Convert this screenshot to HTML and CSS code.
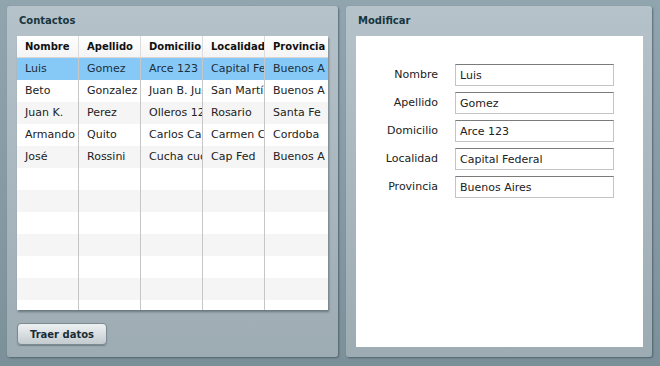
FILE: index.html
```html
<!DOCTYPE html>
<html>
<head>
<meta charset="utf-8">
<link rel="stylesheet" href="styles.css">
</head>
<body>
<div class="app">
  <section class="panel panel-left">
    <h2 class="panel-title">Contactos</h2>
    <div class="grid">
      <div class="row head">
        <div class="cell">Nombre</div>
        <div class="cell">Apellido</div>
        <div class="cell">Domicilio</div>
        <div class="cell">Localidad</div>
        <div class="cell">Provincia</div>
      </div>
      <div class="body">
        <div class="row sel"><div class="cell">Luis</div><div class="cell">Gomez</div><div class="cell">Arce 123</div><div class="cell">Capital Federal</div><div class="cell">Buenos Aires</div></div>
        <div class="row"><div class="cell">Beto</div><div class="cell">Gonzalez</div><div class="cell">Juan B. Justo</div><div class="cell">San Martín</div><div class="cell">Buenos Aires</div></div>
        <div class="row alt"><div class="cell">Juan K.</div><div class="cell">Perez</div><div class="cell">Olleros 1234</div><div class="cell">Rosario</div><div class="cell">Santa Fe</div></div>
        <div class="row"><div class="cell">Armando</div><div class="cell">Quito</div><div class="cell">Carlos Calvo</div><div class="cell">Carmen Carvajal</div><div class="cell">Cordoba</div></div>
        <div class="row alt"><div class="cell">José</div><div class="cell">Rossini</div><div class="cell">Cucha cucha</div><div class="cell">Cap Fed</div><div class="cell">Buenos Aires</div></div>
        <div class="row"><div class="cell"></div><div class="cell"></div><div class="cell"></div><div class="cell"></div><div class="cell"></div></div>
        <div class="row alt"><div class="cell"></div><div class="cell"></div><div class="cell"></div><div class="cell"></div><div class="cell"></div></div>
        <div class="row"><div class="cell"></div><div class="cell"></div><div class="cell"></div><div class="cell"></div><div class="cell"></div></div>
        <div class="row alt"><div class="cell"></div><div class="cell"></div><div class="cell"></div><div class="cell"></div><div class="cell"></div></div>
        <div class="row"><div class="cell"></div><div class="cell"></div><div class="cell"></div><div class="cell"></div><div class="cell"></div></div>
        <div class="row alt"><div class="cell"></div><div class="cell"></div><div class="cell"></div><div class="cell"></div><div class="cell"></div></div>
        <div class="row"><div class="cell"></div><div class="cell"></div><div class="cell"></div><div class="cell"></div><div class="cell"></div></div>
      </div>
    </div>
    <button class="btn">Traer datos</button>
  </section>
  <section class="panel panel-right">
    <h2 class="panel-title">Modificar</h2>
    <div class="content">
      <form class="form">
        <label class="lbl">Nombre</label><input class="inp" type="text" value="Luis">
        <label class="lbl">Apellido</label><input class="inp" type="text" value="Gomez">
        <label class="lbl">Domicilio</label><input class="inp" type="text" value="Arce 123">
        <label class="lbl">Localidad</label><input class="inp" type="text" value="Capital Federal">
        <label class="lbl">Provincia</label><input class="inp" type="text" value="Buenos Aires">
      </form>
    </div>
  </section>
</div>
</body>
</html>
```

FILE: styles.css
```css
html, body {
  margin: 0;
  padding: 0;
}
body {
  width: 660px;
  height: 366px;
  overflow: hidden;
  background: linear-gradient(#91a5af, #7c909a);
  font-family: "DejaVu Sans", Verdana, sans-serif;
  font-size: 11px;
  color: #222;
}
.app {
  display: flex;
  gap: 8px;
  padding: 6px 0 0 7px;
}
.panel {
  box-sizing: border-box;
  height: 351px;
  border-radius: 3px;
  background: linear-gradient(#b6c2c9, #9dabb3);
  box-shadow: 1px 1px 2px rgba(40, 60, 70, 0.55);
  display: flex;
  flex-direction: column;
}
.panel-left {
  width: 331px;
  padding: 0 10px 0 10px;
}
.panel-right {
  width: 306px;
  padding: 0 9px 10px 10px;
}
.panel-title {
  margin: 0;
  height: 30px;
  line-height: 29px;
  padding-left: 2px;
  font-size: 10px;
  font-weight: bold;
  color: #17363f;
}
.grid {
  width: 311px;
  height: 274px;
  background: #fff;
  overflow: hidden;
  box-shadow: 1px 2px 2px rgba(40, 55, 65, 0.45);
  display: flex;
  flex-direction: column;
}
.row {
  display: flex;
  height: 22px;
  flex: none;
}
.cell {
  box-sizing: border-box;
  width: 62px;
  flex: none;
  padding-left: 8px;
  border-right: 1px solid #c6c6c6;
  white-space: nowrap;
  overflow: hidden;
  line-height: 22px;
}
.cell:last-child {
  width: 60px;
  border-right: none;
}
.head {
  height: 22px;
  background: linear-gradient(#ffffff, #f4f4f4);
  border-bottom: 1px solid #d8d8d8;
  box-sizing: border-box;
}
.head .cell {
  font-size: 10px;
  font-weight: bold;
  color: #111;
  line-height: 21px;
  border-right: 1px solid #dcdcdc;
}
.head .cell:last-child {
  border-right: none;
}
.body {
  flex: 1;
  overflow: hidden;
}
.alt {
  background: #f5f5f5;
}
.sel {
  background: #86c9f7;
}
.sel .cell {
  color: #1d2f3a;
}
.btn {
  margin-top: 13px;
  width: 90px;
  height: 22px;
  border: 1px solid #7c8a91;
  border-radius: 4px;
  background: linear-gradient(#eef1f2, #c3cbcf);
  font-family: "DejaVu Sans", Verdana, sans-serif;
  font-size: 10px;
  font-weight: bold;
  color: #1a2d36;
  padding: 0;
  box-shadow: 0 1px 1px rgba(50, 65, 75, 0.4);
}
.content {
  flex: 1;
  background: #fff;
}
.form {
  display: grid;
  grid-template-columns: 82px 159px;
  grid-auto-rows: 22px;
  column-gap: 17px;
  row-gap: 6px;
  padding-top: 28px;
  margin: 0;
}
.lbl {
  text-align: right;
  line-height: 21px;
  color: #222;
}
.inp {
  box-sizing: border-box;
  width: 159px;
  height: 22px;
  margin: 0;
  padding: 0 0 0 4px;
  border: 1px solid #c4c4c4;
  border-top-color: #7b7b7b;
  font-family: "DejaVu Sans", Verdana, sans-serif;
  font-size: 11px;
  color: #222;
  background: #fff;
}
```
